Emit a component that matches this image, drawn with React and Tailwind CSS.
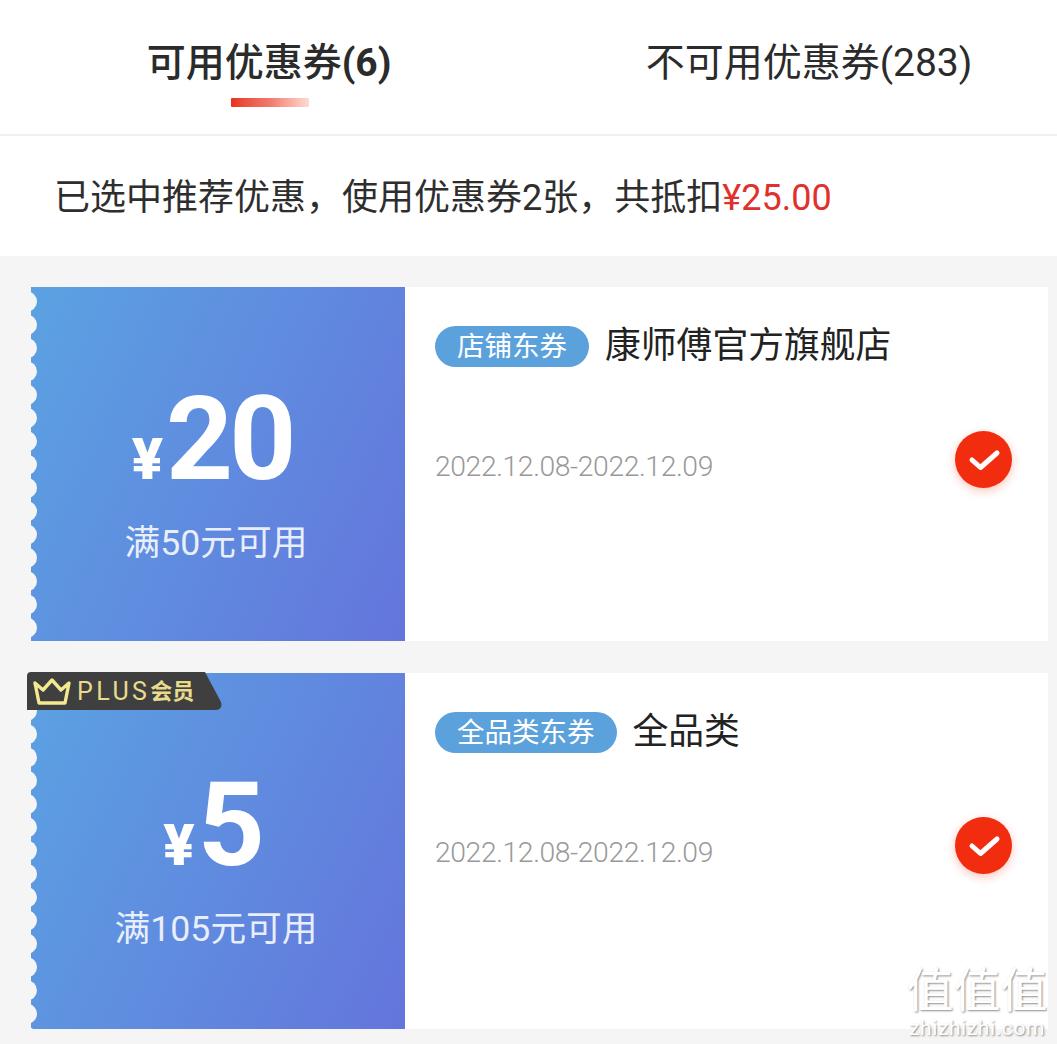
import React from "react";

const FONT = "font-['Roboto','Noto_Sans_CJK_SC',sans-serif]";
const COMMA = "\uFF0C";

function Tabs() {
  return (
    <div className="h-[136px] bg-white border-b-2 border-[#f0f0f0] flex">
      <div className="w-[540px] flex flex-col items-center pt-[36px]">
        <div className="mr-[2px] text-[39px] leading-[54px] font-medium text-[#2b2b2b]">
          可用优惠券<span className="font-bold">(6)</span>
        </div>
        <div className="mt-[8px] w-[78px] h-[9px] rounded-[1px] bg-gradient-to-r from-[#e8301c] via-[#f07a6c] to-[#fbdad5]"></div>
      </div>
      <div className="flex-1 flex flex-col items-center pt-[36px] pl-[21px]">
        <div className="text-[39px] leading-[54px] text-[#2b2b2b]">不可用优惠券(283)</div>
      </div>
    </div>
  );
}

function Scallop() {
  // notches cut into the left edge of the ticket
  const notches = Array.from({ length: 16 }, (_, i) => i);
  return (
    <svg className="absolute left-0 top-0 h-full w-[8px]" aria-hidden="true">
      {notches.map((i) => (
        <circle key={i} cx="-4" cy={14.5 + i * 23.3} r="10" fill="#f5f5f5" />
      ))}
    </svg>
  );
}

function PlusBadge() {
  return (
    <div className="absolute left-[-4px] top-[-1px] w-[195px] h-[39px] flex items-center pl-[6px]">
      <svg className="absolute left-0 top-0" width="195" height="39" viewBox="0 0 195 39" aria-hidden="true">
        <path d="M4 0H178L194 30Q196 38 188 38H0V4Q0 0 4 0Z" fill="#3f3f3f" />
      </svg>
      <svg className="relative" width="38" height="28" viewBox="0 0 38 28" fill="none" stroke="#f4e98f" strokeWidth="3.4" strokeLinejoin="round" aria-hidden="true">
        <path d="M2 5L10 12L19 2L28 12L36 5L32 25H6Z" />
      </svg>
      <span className="relative ml-[6px] text-[25px] leading-none tracking-[3.4px] text-[#e8dc8c]">PLUS</span>
      <span className="relative text-[22px] leading-none font-bold text-[#e8dc8c]">会员</span>
    </div>
  );
}

function Check() {
  return (
    <div className="w-[57px] h-[57px] rounded-full bg-[#f12c0f] shadow-[0_3px_10px_rgba(240,60,30,0.3)] flex items-center justify-center">
      <svg width="34" height="26" viewBox="0 0 34 26" fill="none" stroke="#fff" strokeWidth="5" strokeLinecap="round" strokeLinejoin="round" aria-hidden="true">
        <path d="M5 13L13.5 20.5L30 6" />
      </svg>
    </div>
  );
}

function Coupon({ amount, limit, tag, title, plus, height }) {
  return (
    <div className={`relative ml-[31px] mr-[9px] flex bg-white ${height}`}>
      <div className="relative w-[374px] shrink-0 flex flex-col items-center bg-[linear-gradient(115deg,#5ba2e2,#6475dc)] text-white">
        <Scallop />
        <div className="flex items-baseline mt-[97px] mr-[12px] h-[110px]">
          <span className="text-[58px] leading-[53px] font-black">¥</span>
          <span className="text-[117px] leading-[110px] font-bold tracking-[-4px] ml-[3px]">{amount}</span>
        </div>
        <div className="mt-[26px] mr-[4px] text-[35.7px] leading-[46px] text-[#e9eefb]">{limit}</div>
      </div>
      {plus && <PlusBadge />}
      <div className="flex-1 flex pl-[30px] pr-[36px]">
        <div className="flex-1">
          <div className="flex items-center mt-[39px]">
            <span className="h-[41px] rounded-full bg-[#5ba2dc] px-[22px] text-[27.5px] leading-[41px] text-white">{tag}</span>
            <span className="ml-[16px] text-[35.8px] leading-[41px] text-[#222]">{title}</span>
          </div>
          <div className="mt-[78px] text-[28.3px] leading-[44px] tracking-[-0.4px] font-light text-[#999]">2022.12.08-2022.12.09</div>
        </div>
        <div className="mt-[144px]">
          <Check />
        </div>
      </div>
    </div>
  );
}

function Watermark() {
  return (
    <div className="absolute right-[9px] bottom-[4px] w-[142px] flex flex-col items-center text-white [text-shadow:1px_1px_2px_rgba(0,0,0,0.45)]">
      <div className="text-[47px] leading-[50px] whitespace-nowrap">值值值</div>
      <div className="text-[21px] leading-[24px] tracking-[0.6px] whitespace-nowrap">zhizhizhi.com</div>
    </div>
  );
}

export default function App() {
  return (
    <div className={`relative h-[1044px] overflow-hidden bg-[#f5f5f5] ${FONT}`}>
      <Tabs />
      <div className="h-[120px] bg-white pl-[54px] pt-[38px] text-[36px] leading-[48px] text-[#2e2e2e] whitespace-nowrap">
        已选中推荐优惠{COMMA}使用优惠券2张{COMMA}共抵扣<span className="text-[#e0312c]">¥25.00</span>
      </div>
      <div className="pt-[31px] flex flex-col gap-[32px]">
        <Coupon amount="20" limit="满50元可用" tag="店铺东券" title="康师傅官方旗舰店" height="h-[354px]" />
        <Coupon amount="5" limit="满105元可用" tag="全品类东券" title="全品类" plus height="h-[356px]" />
      </div>
      <Watermark />
    </div>
  );
}
